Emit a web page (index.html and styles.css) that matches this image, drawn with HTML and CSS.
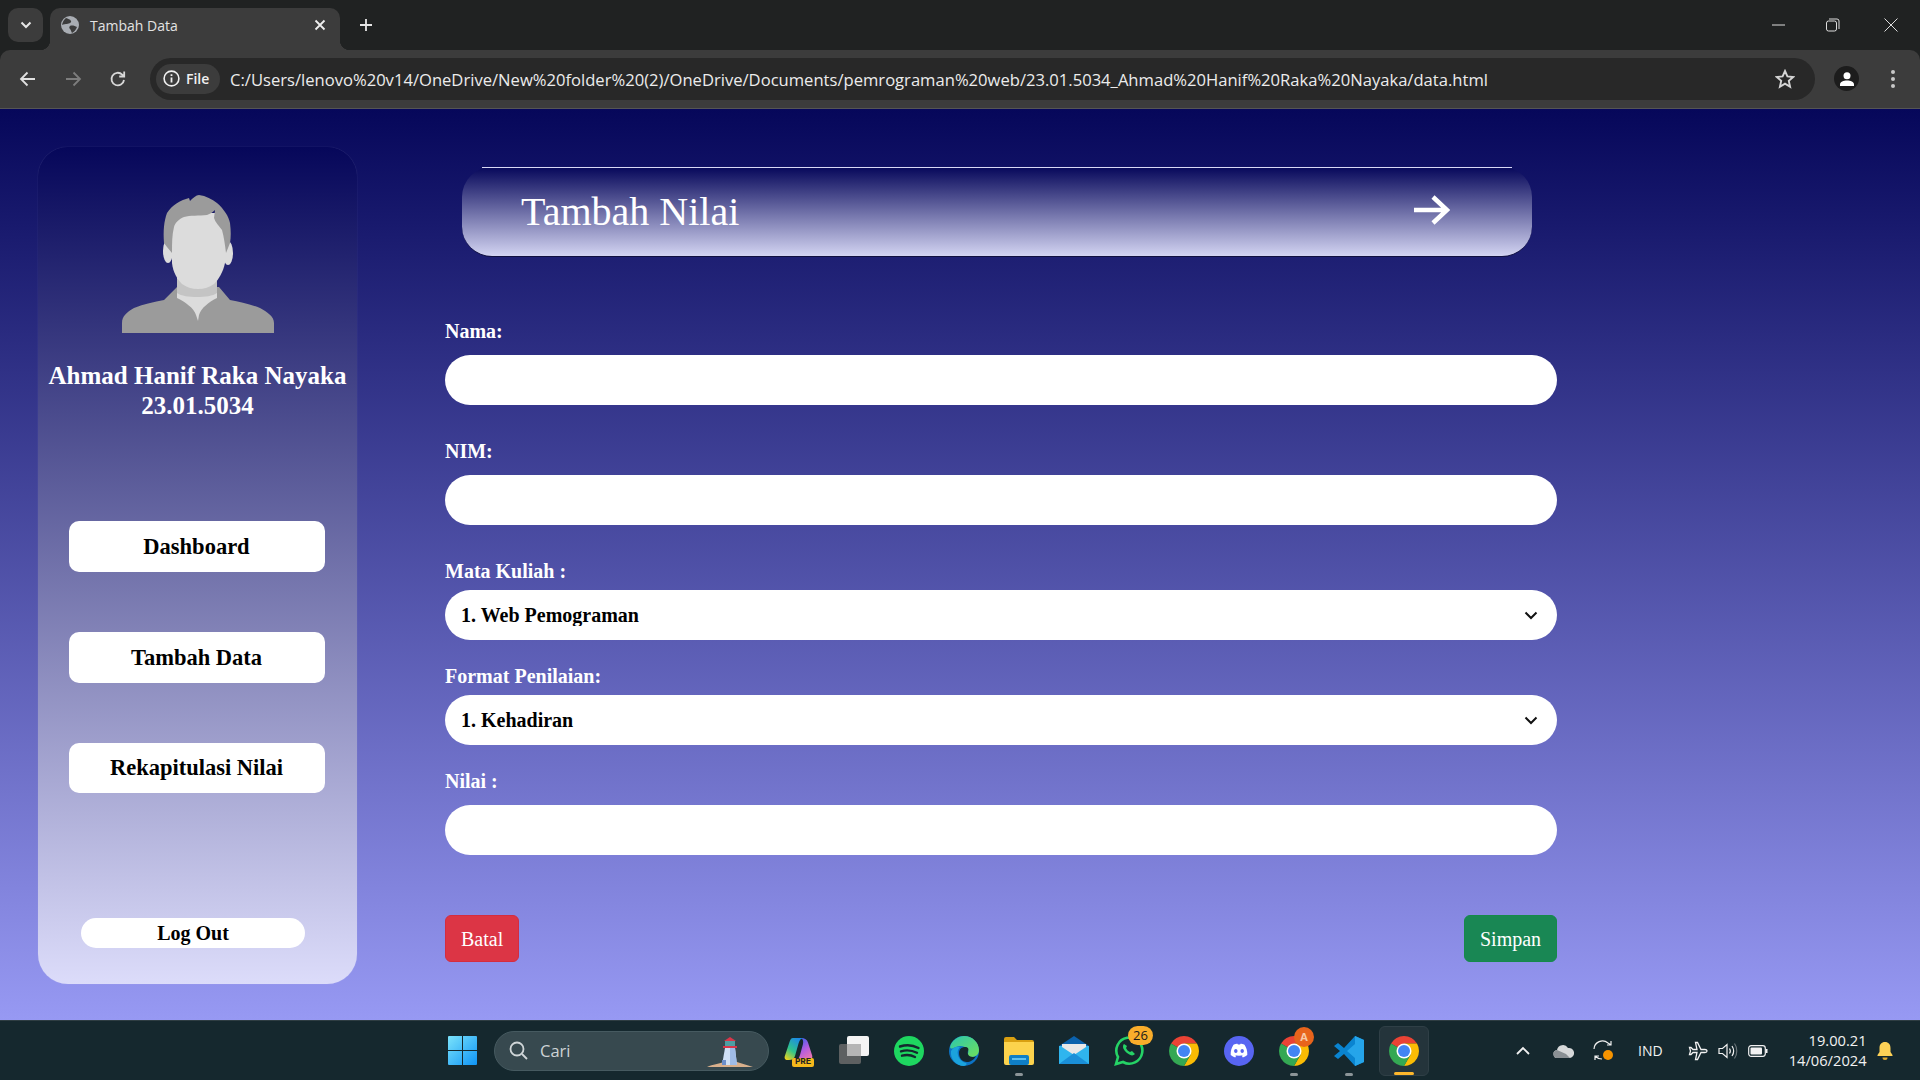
FILE: index.html
```html
<!DOCTYPE html>
<html lang="en">
<head>
  <meta charset="UTF-8">
  <title>Tambah Data</title>
  <link rel="stylesheet" href="styles.css">
</head>
<body>
  <svg class="defs" width="0" height="0">
    <symbol id="chrome" viewBox="4 4 40 40">
      <path fill="#ea4335" d="M6.68 14A20 20 0 0 1 41.32 14L24 14 15.34 19Z"/>
      <path fill="#fbbc04" d="M41.32 14L24 14 32.66 29 24 44A20 20 0 0 0 41.32 14Z"/>
      <path fill="#34a853" d="M6.68 14L15.34 19 32.66 29 24 44A20 20 0 0 1 6.68 14Z"/>
      <circle cx="24" cy="24" r="10" fill="#fff"/>
      <circle cx="24" cy="24" r="8" fill="#4285f4"/>
    </symbol>
  </svg>

  <!-- browser tab strip -->
  <div class="tabstrip">
    <div class="tab-search">
      <svg width="12" height="8" viewBox="0 0 12 8"><path d="M1.5 1.5L6 6l4.5-4.5" fill="none" stroke="#e6e6e6" stroke-width="2"/></svg>
    </div>
    <div class="tab">
      <svg width="18" height="18" viewBox="0 0 18 18">
        <circle cx="9" cy="9" r="9" fill="#a9adb3"/>
        <path d="M5 2c2 1 4 1 5 3S7 8 5 8 1 9 1 9 2 4 5 2zM9 10c2-1 5 0 7 1-1 3-3 5-5 6-1-2-1-3-2-4s-1-2 0-3z" fill="#3c3c3c"/>
      </svg>
      <span class="tab-title">Tambah Data</span>
      <svg class="tab-close" width="12" height="12" viewBox="0 0 12 12"><path d="M1.5 1.5l9 9M10.5 1.5l-9 9" stroke="#eee" stroke-width="1.8"/></svg>
    </div>
    <svg class="new-tab" width="14" height="14" viewBox="0 0 14 14"><path d="M7 1v12M1 7h12" stroke="#e6e6e6" stroke-width="1.8"/></svg>
    <div class="win-controls">
      <svg class="win-min" width="14" height="14" viewBox="0 0 14 14"><path d="M0 7h13" stroke="#ddd" stroke-width="1"/></svg>
      <svg width="14" height="14" viewBox="0 0 14 14"><rect x="0.5" y="3" width="10" height="10" rx="2" fill="none" stroke="#ddd"/><path d="M3 1h8a2 2 0 0 1 2 2v8" fill="none" stroke="#ddd"/></svg>
      <svg width="14" height="14" viewBox="0 0 14 14"><path d="M0.5 0.5l13 13M13.5 0.5l-13 13" stroke="#ddd" stroke-width="1"/></svg>
    </div>
  </div>

  <!-- browser toolbar -->
  <div class="toolbar">
    <div class="nav-icons">
      <svg width="18" height="16" viewBox="0 0 18 16"><path d="M16 8H2M8.5 1.5L2 8l6.5 6.5" fill="none" stroke="#e0e0e0" stroke-width="1.8"/></svg>
      <svg width="18" height="16" viewBox="0 0 18 16"><path d="M2 8h14M9.5 1.5L16 8l-6.5 6.5" fill="none" stroke="#7d7d7d" stroke-width="1.8"/></svg>
      <svg width="18" height="18" viewBox="0 0 18 18"><path d="M15 10a6.3 6.3 0 1 1-1.8-5.4L15 6.5M15.2 1.5v5h-5" fill="none" stroke="#d8d8d8" stroke-width="1.8"/></svg>
    </div>
    <div class="address">
      <div class="chip">
        <svg width="17" height="17" viewBox="0 0 17 17"><circle cx="8.5" cy="8.5" r="7.4" fill="none" stroke="#f0f0f0" stroke-width="1.6"/><path d="M8.5 7.5v5M8.5 4.3v1.8" stroke="#f0f0f0" stroke-width="1.8"/></svg>
        <span>File</span>
      </div>
      <span class="url">C:/Users/lenovo%20v14/OneDrive/New%20folder%20(2)/OneDrive/Documents/pemrograman%20web/23.01.5034_Ahmad%20Hanif%20Raka%20Nayaka/data.html</span>
      <svg class="star" width="20" height="20" viewBox="0 0 20 20"><path d="M10 2l2.4 5.4 5.8.6-4.4 3.9 1.3 5.8L10 14.700l-5.100 3 1.300-5.800L1.800 8l5.800-.6z" fill="none" stroke="#d4d4d4" stroke-width="1.900"/></svg>
    </div>
    <div class="profile">
      <svg width="14" height="14" viewBox="0 0 14 14"><circle cx="7" cy="3.800" r="3.500" fill="#fff"/><path d="M0 14v-1.500C0 9.800 3.500 8.500 7 8.500s7 1.300 7 4V14z" fill="#fff"/></svg>
    </div>
    <svg class="menu-dots" width="6" height="20" viewBox="0 0 6 20"><circle cx="3" cy="3" r="2" fill="#c8c8c8"/><circle cx="3" cy="10" r="2" fill="#c8c8c8"/><circle cx="3" cy="17" r="2" fill="#c8c8c8"/></svg>
  </div>

  <div class="page">
    <aside class="sidebar">
      <svg class="avatar" width="152" height="138" viewBox="0 0 152 138">
        <path fill="#9b9b9b" d="M0 138v-10c0-7 5-11 12-15 10-4 20-6 30-8l13-13h42l11 13c10 2 20 4 30 8 7 4 14 8 14 15v10z"/>
        <path fill="#dcdcdc" d="M55 80h40v23c-8 4-16 10-18 17l-1 6-2-6c-2-7-11-13-19-17z"/>
        <path fill="#c4c4c4" d="M55 84h40v14c-4 3-12 4-20 4s-16-1-20-4z"/>
        <ellipse cx="46" cy="56" rx="5" ry="12" fill="#dcdcdc"/>
        <ellipse cx="106" cy="58" rx="5" ry="12" fill="#dcdcdc"/>
        <path fill="#dcdcdc" d="M50 30c0-8 10-12 26-12h19l8 22v28c-2 9-6 16-11 21-4 3-10 5-16 5s-12-2-16-5c-5-5-9-12-10-21z"/>
        <path fill="#9b9b9b" d="M42 48c-1-12 0-22 3-30 5-8 14-13 22-15l1 3c3-3 6-6 9-6 7 1 13 4 18 8 7 6 12 14 13 20 1 8 1 14 0 20l-4 10c-1-8-2-16-4-23-3-4-7-8-8-12l1-8c-2 2-5 4-8 5-8 1-17 0-23 2-5 2-9 6-10 10-2 8-2 16-2 26l-5-6z"/>
      </svg>
      <div class="user-name">Ahmad Hanif Raka Nayaka<br>23.01.5034</div>
      <a class="side-btn first" href="#">Dashboard</a>
      <a class="side-btn" href="#">Tambah Data</a>
      <a class="side-btn last" href="#">Rekapitulasi Nilai</a>
      <a class="logout" href="#">Log Out</a>
    </aside>

    <main class="content">
      <div class="title-bar">
        <h1>Tambah Nilai</h1>
        <svg class="title-arrow" width="36" height="30" viewBox="0 0 36 30"><path d="M0 15h32M19 2l14 13-14 13" fill="none" stroke="#fff" stroke-width="4.500"/></svg>
      </div>
      <form class="form-nilai">
        <label class="lbl first">Nama:</label>
        <input class="box" type="text">
        <label class="lbl">NIM:</label>
        <input class="box" type="text">
        <label class="lbl tight">Mata Kuliah :</label>
        <div class="select-wrap">
          <select class="box pick"><option>1. Web Pemograman</option></select>
          <svg class="caret" width="14" height="9" viewBox="0 0 14 9"><path d="M1.500 1.500L7 7l5.500-5.500" fill="none" stroke="#111" stroke-width="2"/></svg>
        </div>
        <label class="lbl near tight">Format Penilaian:</label>
        <div class="select-wrap">
          <select class="box pick"><option>1. Kehadiran</option></select>
          <svg class="caret" width="14" height="9" viewBox="0 0 14 9"><path d="M1.500 1.500L7 7l5.500-5.500" fill="none" stroke="#111" stroke-width="2"/></svg>
        </div>
        <label class="lbl near">Nilai :</label>
        <input class="box" type="text">
        <div class="actions">
          <button class="btn btn-red" type="button">Batal</button>
          <button class="btn btn-green" type="button">Simpan</button>
        </div>
      </form>
    </main>
  </div>

  <!-- windows taskbar -->
  <footer class="taskbar">
    <svg class="start" width="29" height="29" viewBox="0 0 29 29">
      <defs><linearGradient id="win" x1="0" y1="0" x2="1" y2="1"><stop offset="0" stop-color="#7be3fb"/><stop offset="1" stop-color="#0f94f5"/></linearGradient></defs>
      <path fill="url(#win)" d="M0 1a1 1 0 0 1 1-1h13v14H0zM15 0h13a1 1 0 0 1 1 1v13H15zM0 15h14v14H1a1 1 0 0 1-1-1zM15 15h14v13a1 1 0 0 1-1 1H15z"/>
    </svg>
    <div class="search">
      <svg width="19" height="19" viewBox="0 0 19 19"><circle cx="8" cy="8" r="6.500" fill="none" stroke="#d0d6d8" stroke-width="1.800"/><path d="M13 13l5 5" stroke="#d0d6d8" stroke-width="1.800"/></svg>
      <span class="search-text">Cari</span>
      <svg class="lighthouse" width="46" height="32" viewBox="0 0 46 32">
        <path d="M0 31c6-3 12-3 16-5h14c5 2 11 3 16 5z" fill="#d9b08c"/>
        <path d="M18 12h10l2 17H15z" fill="#cfe0f5"/>
        <path d="M23 12h5l2 17h-7z" fill="#9fbce8"/>
        <rect x="15" y="24" width="4" height="5" fill="#6d8fca"/>
        <rect x="18" y="5" width="10" height="7" fill="#4f9ea3"/>
        <path d="M17 5l6-4 6 4z" fill="#d8364a"/>
        <rect x="16" y="10" width="14" height="2" fill="#d8364a"/>
      </svg>
    </div>
    <div class="apps">
      <div class="app">
        <svg width="30" height="30" viewBox="0 0 30 30">
          <defs>
            <linearGradient id="cp1" x1="0.100" y1="1" x2="0.700" y2="0"><stop offset="0" stop-color="#f2d21a"/><stop offset=".45" stop-color="#2fc48c"/><stop offset="1" stop-color="#1c8ae6"/></linearGradient>
            <linearGradient id="cp2" x1="0.300" y1="0" x2="0.900" y2="1"><stop offset="0" stop-color="#3a62ee"/><stop offset=".5" stop-color="#b45ce0"/><stop offset="1" stop-color="#f27aa8"/></linearGradient>
          </defs>
          <path fill="url(#cp2)" d="M17 2c4 0 6 1.500 7 4.500l4 12.500c1 3-.5 5-3.500 5H11c3 0 4-2 5-5l3-11c.5-3 0-5-2-6z"/>
          <path fill="url(#cp1)" d="M9 2h10c-2.500.5-3.500 2.500-4.500 5.500L11 20c-1 3-3 4-6 4H3.500C1 24 0 22 1 19.500L5.500 6C6.500 3.500 7 2 9 2z"/>
        </svg>
        <span class="pre">PRE</span>
      </div>
      <div class="app">
        <svg width="30" height="30" viewBox="0 0 30 30"><rect x="8" y="0" width="22" height="20" rx="2" fill="#f4f4f4"/><rect x="0" y="8" width="22" height="20" rx="2" fill="#6a6a6a" fill-opacity=".85"/><rect x="8" y="8" width="14" height="12" fill="#b5b5b5"/></svg>
      </div>
      <div class="app">
        <svg width="30" height="30" viewBox="0 0 30 30"><circle cx="15" cy="15" r="15" fill="#1ed760"/><path d="M6 10.500c6-2 13-1.500 18.500 1.500M7 15.300c5-1.500 11-1 16 1.500M8 19.700c4-1 9-.8 13 1.300" fill="none" stroke="#15282e" stroke-width="2.400" stroke-linecap="round"/></svg>
      </div>
      <div class="app">
        <svg width="30" height="30" viewBox="0 0 30 30">
          <defs><linearGradient id="edge" x1="0" y1="0" x2="1" y2="1"><stop offset="0" stop-color="#2cc6b0"/><stop offset="1" stop-color="#6fe05a"/></linearGradient></defs>
          <circle cx="15" cy="15" r="15" fill="#0c72c4"/>
          <path fill="url(#edge)" d="M1 11C3 4 9 0 15 0c9 0 15 7 15 14 0 5-4 7-8 7-3 0-5-1-5-2 2-1 3-3 2-5-2-4-8-5-12-3-3 1-5 3-6 0z"/>
          <path fill="#15282e" d="M10 17c0-4 3-6 6-6s4 2 3 4c-1 3 1 6 5 6 1 0 2 0 3-1-2 4-6 6-9 6-5 0-8-4-8-9z"/>
          <path fill="#1ba3dc" d="M2 15c2-4 6-5 9-4-2 2-3 5-2 8 1 4 4 7 8 8 1 1 1 2-2 3C7 30 1 23 2 15z"/>
        </svg>
      </div>
      <div class="app running">
        <svg width="30" height="28" viewBox="0 0 30 28"><path d="M0 2a2 2 0 0 1 2-2h8l3 3h15a2 2 0 0 1 2 2v3H0z" fill="#d9a011"/><path d="M0 5h30v21a2 2 0 0 1-2 2H2a2 2 0 0 1-2-2z" fill="#fcd34d"/><rect x="5" y="18" width="20" height="10" rx="2" fill="#0f7fc7"/><rect x="8" y="21" width="14" height="2" fill="#5ec0f0"/></svg>
      </div>
      <div class="app">
        <svg width="30" height="30" viewBox="0 0 30 30"><path d="M0 10L15 0l15 10v18H0z" fill="#0b62ad"/><path d="M0 10h30v18H0z" fill="#2fb5ee"/><path d="M3 8h24v3L15 19 3 11z" fill="#e8e8e8"/><path d="M0 28l15-11 15 11z" fill="#1a8fd8"/></svg>
      </div>
      <div class="app">
        <svg width="30" height="30" viewBox="0 0 30 30"><path d="M2 28l2-7A13 13 0 1 1 9 26z" fill="none" stroke="#25d366" stroke-width="2.600"/><path d="M10 8c-2 2-1 6 3 9s6 3 8 1l-3-3-2 1c-2-1-3-2-4-4l1-2z" fill="#25d366"/></svg>
        <span class="badge-num">26</span>
      </div>
      <div class="app"><svg width="30" height="30"><use href="#chrome"/></svg></div>
      <div class="app">
        <svg width="30" height="30" viewBox="0 0 30 30"><circle cx="15" cy="15" r="15" fill="#5865f2"/><path d="M9.500 8.800c1.500-.6 3-1 4-1l.4.800h2.200l.4-.8c1 0 2.500.4 4 1 1.800 2.800 3 6 2.800 10.300-1.500 1.200-3 1.900-4.500 2.300l-1-1.600 1.800-1c-3 1.300-6.200 1.300-9.200 0l1.800 1-1 1.600c-1.500-.4-3-1.100-4.500-2.300-.2-4.300 1-7.500 2.800-10.300zM11.800 13c-1 0-1.700.9-1.700 2s.8 2 1.700 2c1 0 1.800-.9 1.700-2 0-1.100-.7-2-1.700-2zm6.400 0c-1 0-1.700.9-1.700 2s.8 2 1.700 2 1.700-.9 1.700-2-.7-2-1.700-2z" fill="#fff" fill-rule="evenodd"/></svg>
      </div>
      <div class="app running">
        <svg width="30" height="30"><use href="#chrome"/></svg>
        <span class="badge-a">A</span>
      </div>
      <div class="app running">
        <svg width="30" height="30" viewBox="0 0 30 30"><path d="M21 0l9 4v22l-9 4-11-12-6 5-4-3 6-5-6-5 4-3 6 5z" fill="#0a84d0"/><path d="M21 0l9 4v22l-9 4zM21 8l-8 7 8 7z" fill="#25a5ea" fill-rule="evenodd"/></svg>
      </div>
      <div class="app active">
        <svg width="30" height="30"><use href="#chrome"/></svg>
      </div>
    </div>
    <div class="tray">
      <svg class="t-chev" width="14" height="9" viewBox="0 0 14 9"><path d="M1 8l6-6 6 6" fill="none" stroke="#f2f2f2" stroke-width="1.800"/></svg>
      <svg class="t-cloud" width="21" height="14" viewBox="0 0 21 14"><path d="M5 14a4 4 0 0 1-1-8 6 6 0 0 1 11-2 5 5 0 0 1 2 10z" fill="#d6d8d9"/><path d="M5 14a4 4 0 0 1-1-8l9 4 4 4z" fill="#8a9094"/></svg>
      <svg class="t-sync" width="21" height="21" viewBox="0 0 21 21"><path d="M1 9a8.500 8.500 0 0 1 14-6l3 2M18 1v4h-4M9 19c-3 0-5-1-7-3M2 20v-4h4" fill="none" stroke="#f0f0f0" stroke-width="1.200"/><circle cx="15" cy="15" r="5" fill="#f59300"/></svg>
      <span class="t-lang">IND</span>
      <svg class="t-plane" width="20" height="20" viewBox="0 0 20 20"><path d="M19 10c0-1-1-1.500-2-1.500h-4L9.500 1.500H7.500L9 8.500H5L3 6.500H1.500L2.500 10l-1 3.500H3l2-2h4l-1.500 7h2l3.500-7h4c1 0 2-.5 2-1.500z" fill="none" stroke="#f2f2f2" stroke-width="1.300"/></svg>
      <svg class="t-vol" width="20" height="18" viewBox="0 0 20 18"><path d="M1 6.500h3.500L9 2.500v13l-4.500-4H1z" fill="none" stroke="#f2f2f2" stroke-width="1.200"/><path d="M11.500 6.500c1 1.500 1 3.500 0 5M14 4c2 3 2 7 0 10" fill="none" stroke="#f2f2f2" stroke-width="1.200"/><path d="M16.500 1.500c3 4 3 11 0 15" fill="none" stroke="#6a7478" stroke-width="1.200"/></svg>
      <svg class="t-bat" width="20" height="12" viewBox="0 0 20 12"><rect x="0.700" y="0.700" width="16.600" height="10.600" rx="2.500" fill="none" stroke="#f2f2f2" stroke-width="1.200"/><rect x="2.500" y="2.500" width="11.500" height="7" rx="1" fill="#f2f2f2"/><path d="M18.700 4v4" stroke="#f2f2f2" stroke-width="1.600"/></svg>
      <div class="clock"><span>19.00.21</span><span>14/06/2024</span></div>
      <svg class="t-bell" width="16" height="18" viewBox="0 0 16 18"><path d="M8 0c3.500 0 5.500 2.500 5.500 6v4l2 3v1H.5v-1l2-3V6C2.500 2.500 4.500 0 8 0z" fill="#fdd156"/><path d="M5.500 15.500h5a2.500 2.500 0 0 1-5 0z" fill="#e0a92e"/></svg>
    </div>
  </footer>
</body>
</html>
```

FILE: styles.css
```css
* {
    margin: 0;
    padding: 0;
    box-sizing: border-box;
}

html, body {
    width: 1920px;
    height: 1080px;
    overflow: hidden;
}

body {
    display: flex;
    flex-direction: column;
    background: #202222;
    font-family: "Liberation Serif", serif;
}

.defs {
    display: none;
}

/* Tab strip */
.tabstrip {
    height: 50px;
    display: flex;
    align-items: flex-start;
    padding: 8px 0 0 8px;
    flex-shrink: 0;
}

.tab-search {
    width: 35px;
    height: 34px;
    border-radius: 10px;
    background: #3c3c3c;
    display: flex;
    align-items: center;
    justify-content: center;
}

.tab {
    position: relative;
    width: 290px;
    height: 42px;
    margin-left: 7px;
    padding: 0 14px 8px 11px;
    background: #3c3c3c;
    border-radius: 10px 10px 0 0;
    display: flex;
    align-items: center;
    color: #e3e3e3;
    font: 14px "Open Sans", sans-serif;
}

.tab::before,
.tab::after {
    content: "";
    position: absolute;
    bottom: 0;
    width: 10px;
    height: 10px;
}

.tab::before {
    left: -10px;
    background: radial-gradient(circle at 0 0, transparent 10px, #3c3c3c 10.5px);
}

.tab::after {
    right: -10px;
    background: radial-gradient(circle at 100% 0, transparent 10px, #3c3c3c 10.5px);
}

.tab-title {
    margin-left: 11px;
    flex: 1;
}

.new-tab {
    margin: 10px 0 0 19px;
}

.win-controls {
    margin-left: auto;
    padding: 10px 22px 0 0;
    display: flex;
    gap: 44px;
}

.win-min {
    margin-right: -4px;
}

/* Toolbar */
.toolbar {
    height: 59px;
    flex-shrink: 0;
    display: flex;
    align-items: center;
    padding: 0 0 1px 0;
    background: #3c3c3c;
    border-radius: 10px 10px 0 0;
    border-bottom: 1px solid #555;
}

.nav-icons {
    width: 150px;
    padding-left: 19px;
    display: flex;
    align-items: center;
    gap: 27px;
}

.address {
    width: 1665px;
    height: 42px;
    border-radius: 21px;
    background: #282828;
    display: flex;
    align-items: center;
    padding-left: 6px;
    color: #e8e8e8;
}

.chip {
    width: 64px;
    height: 30px;
    padding-left: 7px;
    border-radius: 15px;
    background: #3c3c3c;
    display: flex;
    align-items: center;
    gap: 6px;
    font: 600 14px "Open Sans", sans-serif;
    color: #f0f0f0;
}

.url {
    margin-left: 10px;
    padding-top: 1px;
    font: 16.6px "Open Sans", sans-serif;
    white-space: nowrap;
    color: #ececec;
}

.star {
    margin-left: auto;
    margin-right: 20px;
}

.profile {
    width: 25px;
    height: 25px;
    margin-left: 19px;
    border-radius: 50%;
    background: #1c1c1c;
    display: flex;
    align-items: center;
    justify-content: center;
}

.menu-dots {
    margin-left: 31px;
}

/* Page */
.page {
    flex: 1;
    display: flex;
    align-items: flex-start;
    padding: 38px 0 0 38px;
    background: linear-gradient(#06075a, #9799f3);
}

.sidebar {
    width: 319px;
    height: 837px;
    padding-top: 48px;
    border-radius: 30px;
    display: flex;
    flex-direction: column;
    align-items: center;
    background: linear-gradient(#06075a, #dcdcfa);
    box-shadow: 0 0 1px rgba(255, 255, 255, 0.3);
}

.avatar {
    margin-left: 1px;
    flex-shrink: 0;
}

.user-name {
    margin-top: 28px;
    color: #fff;
    font-size: 25px;
    font-weight: bold;
    line-height: 30px;
    text-align: center;
}

.side-btn {
    width: 256px;
    height: 51px;
    margin-top: 60px;
    margin-left: -2px;
    border-radius: 10px;
    background: #fff;
    display: flex;
    align-items: center;
    justify-content: center;
    color: #000;
    font-size: 22.5px;
    font-weight: bold;
    text-decoration: none;
}

.side-btn.first {
    margin-top: 100px;
}

.side-btn.last {
    height: 50px;
}

.logout {
    width: 224px;
    height: 30px;
    margin-top: 125px;
    align-self: flex-start;
    margin-left: 43px;
    border-radius: 15px;
    background: #fff;
    display: flex;
    align-items: center;
    justify-content: center;
    color: #000;
    font-size: 20px;
    font-weight: bold;
    text-decoration: none;
}

/* Form side */
.content {
    width: 1112px;
    margin-left: 88px;
    padding-top: 20px;
}

.title-bar {
    position: relative;
    width: 1070px;
    height: 90px;
    margin-left: 17px;
    padding: 0 82px 0 59px;
    display: flex;
    align-items: center;
    justify-content: space-between;
    border-radius: 30px;
    border-bottom: 1px solid #101040;
    background: linear-gradient(#06075a, #d3d4f2);
}

/* the thin light line on top stops short of the corners */
.title-bar::before {
    content: "";
    position: absolute;
    top: 0;
    left: 20px;
    right: 20px;
    height: 1px;
    background: #d8d8f5;
}

.title-bar h1 {
    color: #fff;
    font-size: 40px;
    font-weight: normal;
}

.title-arrow {
    margin-bottom: 3px;
}

.form-nilai {
    display: flex;
    flex-direction: column;
}

.lbl {
    height: 21px;
    margin-top: 35px;
    margin-bottom: 14px;
    color: #fff;
    font-size: 20px;
    font-weight: bold;
    line-height: 22px;
}

.lbl.first {
    margin-top: 63px;
}

.lbl.near {
    margin-top: 25px;
}

.lbl.tight {
    margin-bottom: 9px;
}

.box {
    width: 100%;
    height: 50px;
    border: none;
    border-radius: 25px;
    background: #fff;
    display: block;
}

.select-wrap {
    position: relative;
}

.pick {
    appearance: none;
    padding-left: 16px;
    color: #000;
    font-family: "Liberation Serif", serif;
    font-size: 20px;
    font-weight: bold;
}

.caret {
    position: absolute;
    top: 21px;
    right: 19px;
}

.actions {
    margin-top: 60px;
    display: flex;
    justify-content: space-between;
}

.btn {
    height: 47px;
    padding: 1px 15px 0;
    border-radius: 6px;
    color: #fff;
    font-family: "Liberation Serif", serif;
    font-size: 20px;
}

.btn-red {
    width: 74px;
    background: #dc3545;
    border: 1px solid #d42c40;
}

.btn-green {
    width: 93px;
    background: #198754;
    border: 1px solid #158a4a;
}

/* Taskbar */
.taskbar {
    height: 60px;
    flex-shrink: 0;
    display: flex;
    align-items: center;
    padding-left: 448px;
    background: #15282e;
    border-top: 1px solid #2e3d42;
}

.search {
    width: 275px;
    height: 40px;
    margin-left: 17px;
    padding: 0 13px 0 14px;
    border-radius: 20px;
    background: #37494f;
    border: 1px solid #465a60;
    display: flex;
    align-items: center;
    color: #cdd3d5;
    font: 16.5px "Open Sans", sans-serif;
    position: relative;
}

.search-text {
    margin-left: 12px;
}

.lighthouse {
    margin-left: auto;
    margin-top: 3px;
    margin-right: 2px;
}

.apps {
    display: flex;
    margin-left: 2px;
}

.app {
    position: relative;
    width: 55px;
    height: 50px;
    display: flex;
    align-items: center;
    justify-content: center;
    border-radius: 6px;
}

.app.running::after,
.app.active::after {
    content: "";
    position: absolute;
    left: 50%;
    bottom: 0;
    width: 8px;
    height: 3px;
    margin-left: -4px;
    border-radius: 2px;
    background: #8c9598;
}

.app.active {
    width: 50px;
    margin-left: 3px;
    background: #24343b;
    border: 1px solid #2f3f46;
}

.app.active::after {
    width: 20px;
    margin-left: -10px;
    background: #fdb72c;
}

.pre {
    position: absolute;
    left: 21px;
    top: 32px;
    width: 22px;
    height: 9px;
    border-radius: 2px;
    background: #f5b91c;
    color: #222;
    font: bold 9px/9px "Liberation Mono", monospace;
    text-align: center;
}

.badge-num {
    position: absolute;
    top: 0;
    right: 3px;
    width: 25px;
    height: 19px;
    border-radius: 10px;
    background: #f9ad2b;
    color: #1a1a1a;
    font: 13px/19px "Open Sans", sans-serif;
    text-align: center;
}

.badge-a {
    position: absolute;
    top: 1px;
    right: 7px;
    width: 20px;
    height: 20px;
    border-radius: 50%;
    background: #e8641c;
    color: #f7c9a8;
    font: bold 11px/20px "Open Sans", sans-serif;
    text-align: center;
}

.tray {
    position: absolute;
    left: 1516px;
    top: 1021px;
    width: 404px;
    height: 59px;
    display: flex;
    align-items: center;
    color: #f2f2f2;
    font: 14px "Open Sans", sans-serif;
}

.t-cloud {
    margin-left: 23px;
}

.t-sync {
    margin-left: 19px;
}

.t-lang {
    margin-left: 24px;
}

.t-plane {
    margin-left: 25px;
}

.t-vol {
    margin-left: 10px;
}

.t-bat {
    margin-left: 10px;
}

.clock {
    width: 99px;
    margin-top: -2px;
    display: flex;
    flex-direction: column;
    align-items: flex-end;
    font-size: 14.7px;
    line-height: 20px;
}

.t-bell {
    margin-left: 10px;
}
```
